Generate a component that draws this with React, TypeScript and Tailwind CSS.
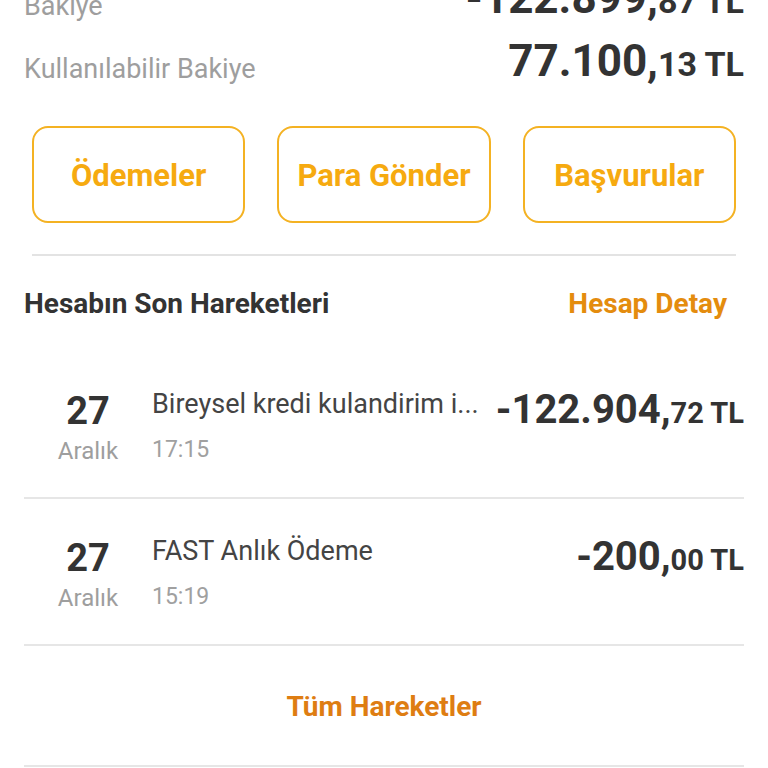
const font = { fontFamily: "Roboto, 'Noto Sans', sans-serif" };

function Amount({ whole, frac, big, small }: { whole: string; frac: string; big: string; small: string }) {
  return (
    <div className="flex items-baseline font-bold text-[#333333] whitespace-nowrap">
      <span className={big}>{whole}</span>
      <span className={small}>{frac} TL</span>
    </div>
  );
}

const transactions = [
  { day: "27", month: "Aralık", title: "Bireysel kredi kulandirim i...", time: "17:15", whole: "-122.904,", frac: "72" },
  { day: "27", month: "Aralık", title: "FAST Anlık Ödeme", time: "15:19", whole: "-200,", frac: "00" },
];

export default function App() {
  return (
    <div className="w-[768px] h-[768px] overflow-hidden bg-white" style={font}>
      {/* Balance summary */}
      <div className="px-6 -mt-[24px]">
        <div className="flex justify-between items-baseline h-[44px] leading-none">
          <span className="text-[27px] text-[#9e9e9e] translate-y-[2px]">Bakiye</span>
          <Amount whole="-122.899," frac="87" big="text-[44px]" small="text-[34px]" />
        </div>
        <div className="flex justify-between items-baseline h-[44px] mt-[19px] leading-none">
          <span className="text-[27px] text-[#9e9e9e] translate-y-[2px]">Kullanılabilir Bakiye</span>
          <Amount whole="77.100," frac="13" big="text-[44px]" small="text-[34px]" />
        </div>
      </div>

      {/* Quick actions */}
      <div className="mx-8 mt-[43px] grid grid-cols-3 gap-8">
        {["Ödemeler", "Para Gönder", "Başvurular"].map(label => (
          <button
            key={label}
            className="h-[97px] pt-[3px] rounded-[16px] border-2 border-[#f4b223] bg-white text-[31px] font-bold text-[#f6aa10]"
          >
            {label}
          </button>
        ))}
      </div>
      <div className="mx-8 mt-[31px] h-[2px] bg-[#e3e3e3]" />

      {/* Recent transactions header */}
      <div className="mt-6 h-12 flex items-center justify-between pl-6 pr-[41px]">
        <span className="text-[28px] font-bold text-[#333333]">Hesabın Son Hareketleri</span>
        <span className="text-[28px] font-bold text-[#e48c0e]">Hesap Detay</span>
      </div>

      <div className="mx-6 mt-6">
        {transactions.map((t, i) => (
          <div key={i} className="flex items-start h-[147px] pt-[36px] border-b-2 border-[#e6e6e6]">
            <div className="w-[128px] flex flex-col items-center pt-[3px]">
              <span className="text-[38px] font-bold leading-[40px] text-[#333333]">{t.day}</span>
              <span className="mt-[5px] text-[24px] leading-[30px] text-[#9e9e9e]">{t.month}</span>
            </div>
            <div className="flex-1 flex flex-col">
              <span className="text-[27px] leading-[32px] text-[#444444] whitespace-nowrap">{t.title}</span>
              <span className="mt-[15px] text-[23px] leading-[30px] text-[#a0a0a0]">{t.time}</span>
            </div>
            <div className="pt-[2px] leading-[40px]">
              <Amount whole={t.whole} frac={t.frac} big="text-[40px]" small="text-[29px]" />
            </div>
          </div>
        ))}
        <div className="h-[121px] pt-[3px] flex items-center justify-center border-b-2 border-[#e6e6e6]">
          <span className="text-[28px] font-bold text-[#de7d12]">Tüm Hareketler</span>
        </div>
      </div>
    </div>
  );
}
